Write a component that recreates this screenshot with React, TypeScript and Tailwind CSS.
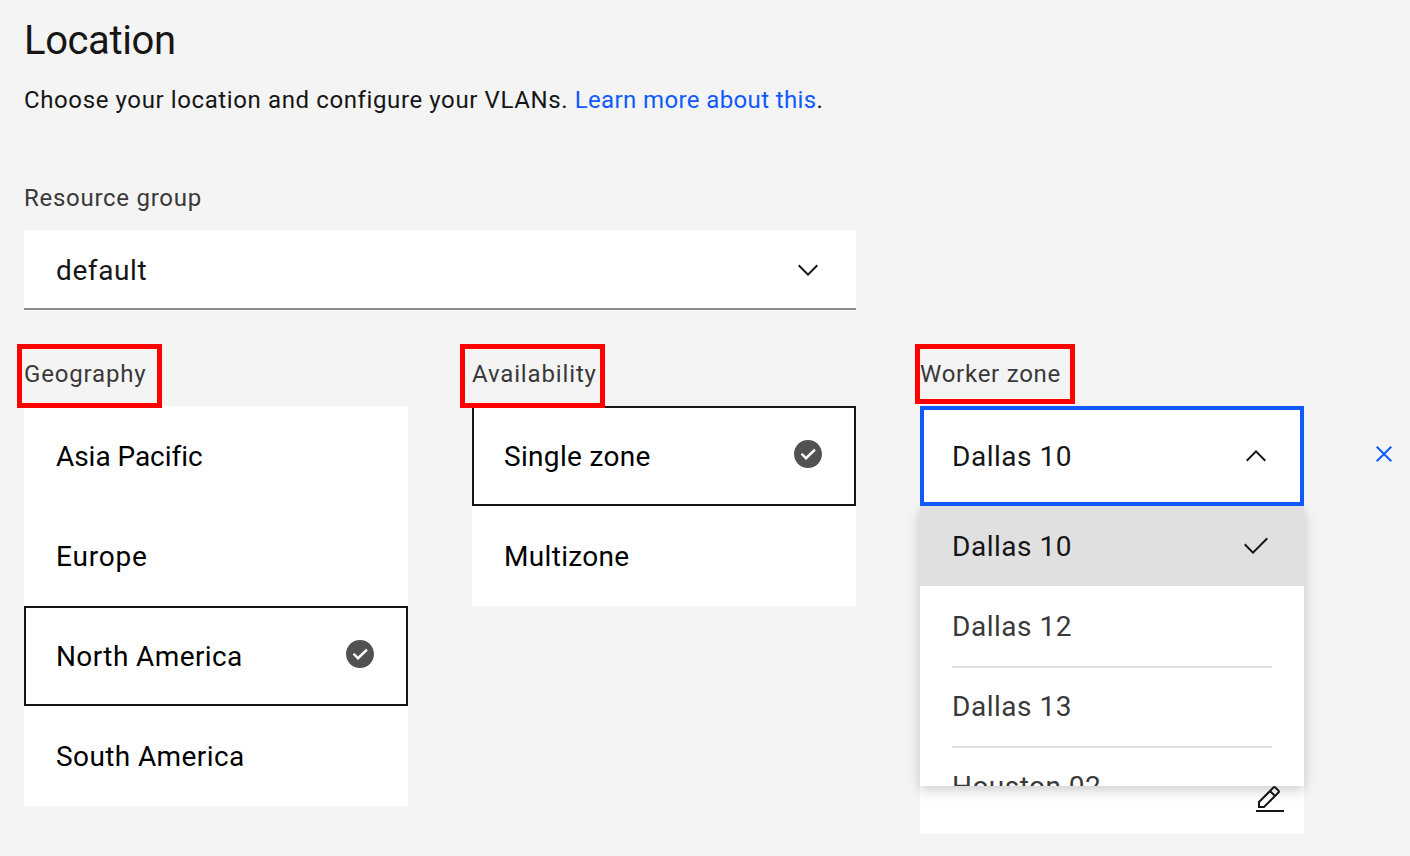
import React from 'react';

const Chevron = ({ up = false }: { up?: boolean }) => (
  <svg className={up ? 'size-8 rotate-180' : 'size-8 translate-y-px'} viewBox="0 0 16 16" fill="#161616">
    <path d="M8 11L3 6 3.7 5.3 8 9.6 12.3 5.3 13 6z" />
  </svg>
);

const CheckFilled = () => (
  <svg className="size-8 -translate-y-0.5" viewBox="0 0 16 16" fill="#525252">
    <path d="M8,1C4.1,1,1,4.1,1,8c0,3.9,3.1,7,7,7s7-3.1,7-7C15,4.1,11.9,1,8,1z M7,11L4.3,8.3l0.9-0.8L7,9.3l4-3.9l0.9,0.8L7,11z" />
  </svg>
);

const Tile = ({ text, selected = false, spacing }: { text: string; selected?: boolean; spacing: string }) => (
  <div
    className={`flex h-[100px] items-center justify-between border-2 bg-white pr-[30px] pl-[30px] text-[28px] text-black ${
      selected ? 'border-[#161616]' : 'border-white'
    }`}
  >
    <span className={`translate-y-px ${spacing}`}>{text}</span>
    {selected && <CheckFilled />}
  </div>
);

const Label = ({ text, spacing, box }: { text: string; spacing: string; box?: string }) => (
  <div className="relative h-[32px] text-[24px] leading-[32px] text-[#393939]">
    <span className={spacing}>{text}</span>
    {box && <div className={`absolute z-30 border-[5px] border-[#ff0000] ${box}`} />}
  </div>
);

export default function App() {
  return (
    <main className="flex h-[856px] w-[1410px] flex-col overflow-hidden bg-[#f4f4f4] pl-6 font-['Roboto',sans-serif] whitespace-nowrap text-[#161616]">
      <h1 className="mt-[17px] h-12 text-[40px] leading-[48px] font-normal">
        <span className="tracking-[-0.4px]">Location</span>
      </h1>
      <p className="mt-[19px] h-8 text-[24px] leading-8">
        <span className="tracking-[0.61px]">Choose your location and configure your VLANs. </span>
        <a className="tracking-[0.38px] text-[#0f5aff]">Learn more about this</a>
        <span>.</span>
      </p>

      <div className="mt-[66px]">
        <Label text="Resource group" spacing="tracking-[0.72px]" />
      </div>
      <div className="mt-4 flex h-20 w-[832px] items-center justify-between border-b-2 border-[#8d8d8d] bg-white pr-8 pl-8 text-[28px]">
        <span className="translate-y-[2px] tracking-[0.6px]">default</span>
        <Chevron />
      </div>

      <div className="mt-12 flex h-[476px] gap-16">
        <section className="w-96">
          <Label text="Geography" spacing="tracking-[0.84px]" box="-top-[14px] -left-[7px] h-[64px] w-[145px]" />
          <div className="mt-4">
            <Tile text="Asia Pacific" spacing="tracking-[-0.05px]" />
            <Tile text="Europe" spacing="tracking-[0.8px]" />
            <Tile text="North America" spacing="tracking-[0.4px]" selected />
            <Tile text="South America" spacing="tracking-[0.4px]" />
          </div>
        </section>

        <section className="w-96">
          <Label text="Availability" spacing="tracking-[0.86px]" box="-top-[14px] -left-[12px] h-[64px] w-[145px]" />
          <div className="mt-4">
            <Tile text="Single zone" spacing="tracking-[0.32px]" selected />
            <Tile text="Multizone" spacing="tracking-[0.32px]" />
          </div>
        </section>

        <section className="flex w-96 flex-col">
          <Label text="Worker zone" spacing="tracking-[0.74px]" box="-top-[14px] -left-[5px] h-[60px] w-[160px]" />
          <div className="relative mt-4 text-[28px]">
            <div className="relative z-20 flex h-[100px] items-center justify-between border-4 border-[#0f5aff] bg-white px-7">
              <span className="translate-y-px tracking-[0.52px]">Dallas 10</span>
              <Chevron up />
            </div>
            <div className="absolute top-[100px] left-0 z-10 h-[280px] w-96 bg-white shadow-[0_4px_12px_rgba(0,0,0,0.2)]">
              <div className="h-full overflow-hidden text-[#393939]">
                <div className="flex h-20 items-center justify-between bg-[#e0e0e0] px-8 text-[#161616]">
                  <span className="translate-y-px tracking-[0.52px]">Dallas 10</span>
                  <svg className="size-8" viewBox="0 0 32 32" fill="#161616">
                    <path d="M13 24L4 15 5.414 13.586 13 21.171 26.586 7.586 28 9 13 24z" />
                  </svg>
                </div>
                <div className="mx-8 flex h-20 items-center">
                  <span className="translate-y-px tracking-[0.52px]">Dallas 12</span>
                </div>
                <div className="mx-8 flex h-20 items-center border-t-2 border-[#e0e0e0]">
                  <span className="tracking-[0.52px]">Dallas 13</span>
                </div>
                <div className="mx-8 flex h-20 items-center border-t-2 border-[#e0e0e0]">
                  <span className="tracking-[0.45px]">Houston 02</span>
                </div>
              </div>
            </div>
          </div>
          <div className="flex flex-1 items-end justify-end bg-white pr-[18px] pb-[18px]">
            <svg className="size-8" viewBox="0 0 32 32" fill="#161616">
              <path d="M2 26H30V28H2zM25.4 9c.8-.8.8-2 0-2.8 0 0 0 0 0 0l-3.6-3.6c-.8-.8-2-.8-2.8 0 0 0 0 0 0 0l-15 15V24h6.4L25.4 9zM20.4 4L24 7.6l-3 3L17.4 7 20.4 4zM6 22v-3.6l10-10 3.6 3.6-10 10H6z" />
            </svg>
          </div>
        </section>

        <button className="mt-8 flex h-[132px] w-8 items-center justify-center">
          <svg className="size-8 -translate-y-0.5" viewBox="0 0 32 32" fill="#0f5aff">
            <path d="M24 9.4L22.6 8 16 14.6 9.4 8 8 9.4 14.6 16 8 22.6 9.4 24 16 17.4 22.6 24 24 22.6 17.4 16z" />
          </svg>
        </button>
      </div>
    </main>
  );
}
